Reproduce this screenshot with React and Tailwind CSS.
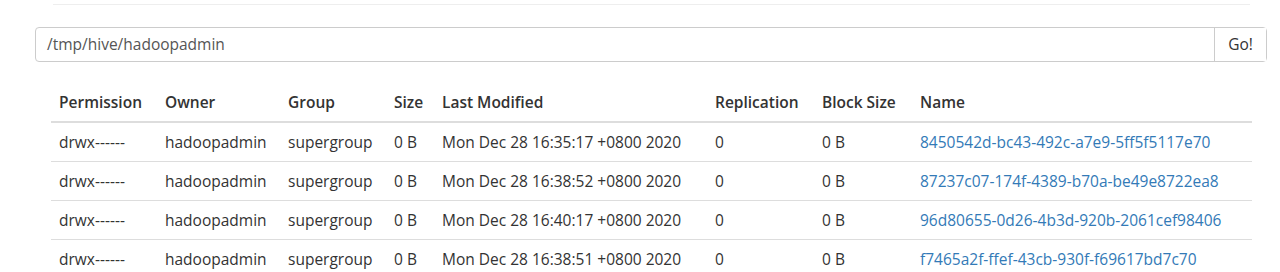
import React from 'react'

const rows = [
  { time: 'Mon Dec 28 16:35:17 +0800 2020', name: '8450542d-bc43-492c-a7e9-5ff5f5117e70' },
  { time: 'Mon Dec 28 16:38:52 +0800 2020', name: '87237c07-174f-4389-b70a-be49e8722ea8' },
  { time: 'Mon Dec 28 16:40:17 +0800 2020', name: '96d80655-0d26-4b3d-920b-2061cef98406' },
  { time: 'Mon Dec 28 16:38:51 +0800 2020', name: 'f7465a2f-ffef-43cb-930f-f69617bd7c70' },
]

const cols = [
  { label: 'Permission', w: 'w-[106px]' },
  { label: 'Owner', w: 'w-[123px]' },
  { label: 'Group', w: 'w-[106px]' },
  { label: 'Size', w: 'w-[48px]' },
  { label: 'Last Modified', w: 'w-[273px]' },
  { label: 'Replication', w: 'w-[107px]' },
  { label: 'Block Size', w: 'w-[98px]' },
  { label: 'Name', w: 'w-[340px]' },
]

export default function App() {
  return (
    <div className="w-[1280px] h-[272px] overflow-hidden bg-white text-[#333] font-['Open_Sans',sans-serif] text-[15.5px]">
      {/* top rule */}
      <div className="ml-[53px] mr-[30px] pt-[4px]">
        <div className="border-t border-[#eee]" />
      </div>

      {/* path input */}
      <div className="ml-[35px] mr-[13px] mt-[22px] flex h-[35px] rounded-[4px] border border-[#ccc]">
        <div className="flex-1 flex items-center pl-[11px] text-[#555]">/tmp/hive/hadoopadmin</div>
        <div className="w-[52px] flex items-center justify-center border-l border-[#ccc] bg-white text-[#333]">Go!</div>
      </div>

      {/* listing */}
      <div className="ml-[51px] mt-[21px]">
        <table className="table-fixed border-collapse w-[1201px] leading-[22px]">
          <thead>
            <tr className="border-b-2 border-[#ddd]">
              {cols.map((c) => (
                <th key={c.label} className={`${c.w} px-[8px] py-[8px] text-left font-semibold whitespace-nowrap`}>{c.label}</th>
              ))}
            </tr>
          </thead>
          <tbody>
            {rows.map((r) => (
              <tr key={r.name} className="border-b border-[#ddd] whitespace-nowrap">
                <td className="px-[8px] py-[8px]">drwx------</td>
                <td className="px-[8px] py-[8px]">hadoopadmin</td>
                <td className="px-[8px] py-[8px]">supergroup</td>
                <td className="px-[8px] py-[8px]">0 B</td>
                <td className="px-[8px] py-[8px]">{r.time}</td>
                <td className="px-[8px] py-[8px]">0</td>
                <td className="px-[8px] py-[8px]">0 B</td>
                <td className="px-[8px] py-[8px] text-[#337ab7]">{r.name}</td>
              </tr>
            ))}
          </tbody>
        </table>
      </div>
    </div>
  )
}
